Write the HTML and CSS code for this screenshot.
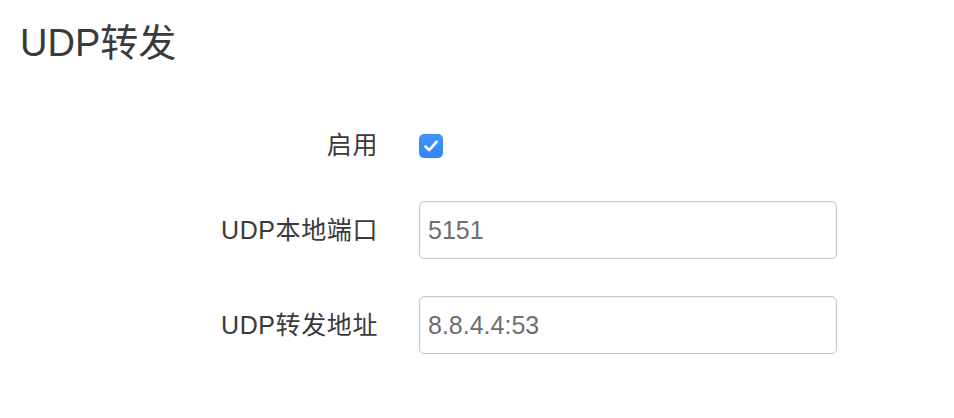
FILE: index.html
```html
<!DOCTYPE html>
<html lang="zh-CN">
<head>
<meta charset="utf-8">
<title>UDP转发</title>
<link rel="stylesheet" href="styles.css">
</head>
<body>
<div class="page">
  <h1 class="title">UDP转发</h1>
  <form class="form">
    <div class="row row-check">
      <label class="label">启用</label>
      <div class="control">
        <span class="checkbox" role="checkbox" aria-checked="true">
          <svg width="24" height="24" viewBox="0 0 24 24"><polyline points="6.5,12.5 10.2,16.2 17.5,7.8" fill="none" stroke="#fff" stroke-width="2.6" stroke-linecap="round" stroke-linejoin="round"/></svg>
        </span>
      </div>
    </div>
    <div class="row">
      <label class="label">UDP本地端口</label>
      <div class="control"><input class="input" type="text" value="5151"></div>
    </div>
    <div class="row">
      <label class="label">UDP转发地址</label>
      <div class="control"><input class="input" type="text" value="8.8.4.4:53"></div>
    </div>
  </form>
</div>
</body>
</html>
```
FILE: styles.css
```css
html, body {
  margin: 0;
  padding: 0;
  background: #fff;
}
body {
  font-family: "Liberation Sans", "Noto Sans CJK SC", sans-serif;
  color: #3a3a3a;
}
.page {
  padding: 22px 20px 0 20px;
}
.title {
  margin: 0;
  font-size: 38px;
  line-height: 42px;
  font-weight: normal;
  color: #3a3a3a;
}
.form {
  display: flex;
  flex-direction: column;
  margin-top: 69px;
  margin-left: -20px;
}
.row {
  display: grid;
  grid-template-columns: 378px 418px;
  column-gap: 41px;
  align-items: center;
  height: 58px;
  margin-bottom: 37px;
}
.row-check {
  height: 24px;
  margin-bottom: 44px;
}
.label {
  text-align: right;
  font-size: 25px;
  line-height: 25px;
  letter-spacing: 0.6px;
  color: #3a3a3a;
}
.control {
  display: flex;
  align-items: center;
}
.checkbox {
  display: block;
  width: 24px;
  height: 24px;
  border-radius: 5px;
  background: linear-gradient(#4194fa, #3186f2);
}
.checkbox svg {
  display: block;
}
.input {
  box-sizing: border-box;
  width: 418px;
  height: 58px;
  margin: 0;
  padding: 0 8px;
  border: 1.5px solid #c8c8c8;
  border-radius: 5px;
  box-shadow: inset 0 1px 2px rgba(0, 0, 0, 0.08);
  font-family: "Liberation Sans", "Noto Sans CJK SC", sans-serif;
  font-size: 25px;
  color: #6e6e6e;
  background: #fff;
  outline: none;
}
```
